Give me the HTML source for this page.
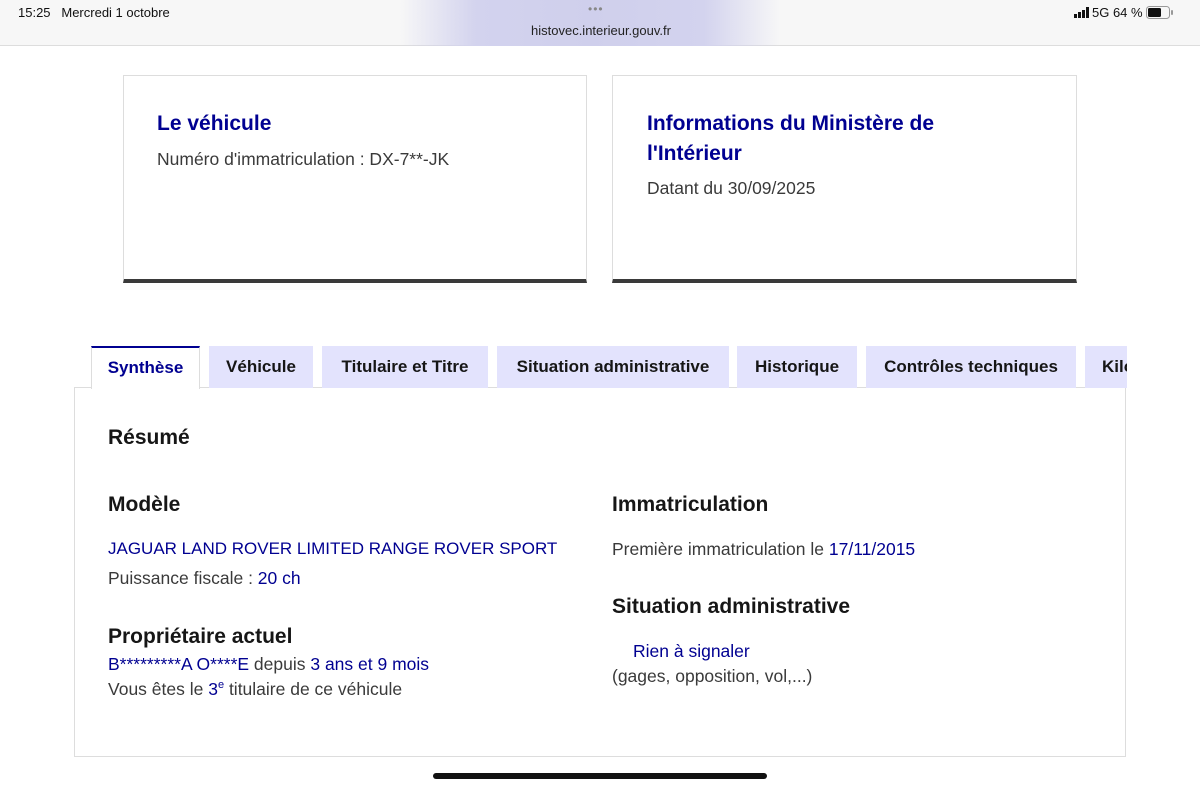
<!DOCTYPE html>
<html><head><meta charset="utf-8"><style>
*{margin:0;padding:0;box-sizing:border-box}
body{width:1200px;height:788px;overflow:hidden;background:#fff;font-family:"Liberation Sans",sans-serif;color:#3a3a3a;position:relative}
.a{position:absolute;white-space:nowrap}
.bar{position:absolute;left:0;top:0;width:1200px;height:46px;background:#f7f7f7;border-bottom:1px solid #ddd}
.glow{position:absolute;left:400px;top:0;width:380px;height:46px;background:linear-gradient(90deg,rgba(247,247,247,0),#d3d3ee 20%,#cfcfec 50%,#d3d3ee 80%,rgba(247,247,247,0))}
.card{position:absolute;top:75px;height:208px;border:1px solid #ddd;border-bottom:4px solid #3a3a3a}
.blue{color:#000091}
.tab{position:absolute;top:346px;height:42px;background:#e3e3fd;font-size:17px;font-weight:bold;color:#161616;text-align:center;line-height:42px;overflow:hidden}
.t{font-size:17.5px}
.hd{font-size:21px;font-weight:bold;color:#161616}
</style></head><body>
<div class="bar"><div class="glow"></div></div>
<div class="a" style="left:18px;top:5px;font-size:13px;color:#111">15:25&nbsp;&nbsp;&nbsp;Mercredi 1 octobre</div>
<div class="a" style="left:588px;top:2px;font-size:12px;color:#888;letter-spacing:1px">•••</div>
<div class="a" style="left:531px;top:23px;font-size:13px;color:#222">histovec.interieur.gouv.fr</div>
<div class="a" style="left:1074px;top:5px;font-size:13px;color:#111">
<svg width="18" height="11" style="vertical-align:-1px"><rect x="0" y="7" width="3" height="4" fill="#111"/><rect x="4" y="5" width="3" height="6" fill="#111"/><rect x="8" y="3" width="3" height="8" fill="#111"/><rect x="12" y="0" width="3" height="11" fill="#111"/></svg>5G 64 %
<svg width="28" height="13" style="vertical-align:-2px"><rect x="0.5" y="0.5" width="23" height="12" rx="3" fill="none" stroke="#999"/><rect x="2" y="2" width="13" height="9" rx="1.5" fill="#111"/><rect x="25" y="4" width="2" height="5" rx="1" fill="#999"/></svg></div>

<div class="card" style="left:123px;width:464px"></div>
<div class="a hd" style="left:157px;top:112px;color:#000091">Le véhicule</div>
<div class="a t" style="left:157px;top:149px">Numéro d'immatriculation : DX-7**-JK</div>
<div class="card" style="left:612px;width:465px"></div>
<div class="a hd" style="left:647px;top:109px;color:#000091;line-height:30px">Informations du Ministère de<br>l'Intérieur</div>
<div class="a t" style="left:647px;top:178px">Datant du 30/09/2025</div>

<div style="position:absolute;left:74px;top:387px;width:1052px;height:370px;border:1px solid #ddd"></div>
<div class="tab" style="left:91px;width:109px;background:#fff;border-top:2px solid #000091;border-left:1px solid #ddd;border-right:1px solid #ddd;height:43px;color:#000091;line-height:40px">Synthèse</div>
<div class="tab" style="left:209px;width:104px">Véhicule</div>
<div class="tab" style="left:322px;width:166px">Titulaire et Titre</div>
<div class="tab" style="left:497px;width:232px">Situation administrative</div>
<div class="tab" style="left:737px;width:120px">Historique</div>
<div class="tab" style="left:866px;width:210px">Contrôles techniques</div>
<div class="tab" style="left:1085px;width:42px;text-align:left;padding-left:17px">Kilométrage</div>

<div class="a hd" style="left:108px;top:426px">Résumé</div>
<div class="a hd" style="left:108px;top:493px">Modèle</div>
<div class="a blue" style="left:108px;top:539px;font-size:17px">JAGUAR LAND ROVER LIMITED RANGE ROVER SPORT</div>
<div class="a t" style="left:108px;top:568px">Puissance fiscale : <span class="blue">20 ch</span></div>
<div class="a hd" style="left:108px;top:625px">Propriétaire actuel</div>
<div class="a t" style="left:108px;top:654px"><span class="blue">B*********A O****E</span> depuis <span class="blue">3 ans et 9 mois</span></div>
<div class="a t" style="left:108px;top:679px">Vous êtes le <span class="blue">3<sup style="font-size:11px">e</sup></span> titulaire de ce véhicule</div>

<div class="a hd" style="left:612px;top:493px">Immatriculation</div>
<div class="a t" style="left:612px;top:539px">Première immatriculation le <span class="blue">17/11/2015</span></div>
<div class="a hd" style="left:612px;top:595px">Situation administrative</div>
<div class="a t blue" style="left:633px;top:641px">Rien à signaler</div>
<div class="a t" style="left:612px;top:666px">(gages, opposition, vol,...)</div>

<div style="position:absolute;left:433px;top:773px;width:334px;height:6px;border-radius:3px;background:#111"></div>
</body></html>
